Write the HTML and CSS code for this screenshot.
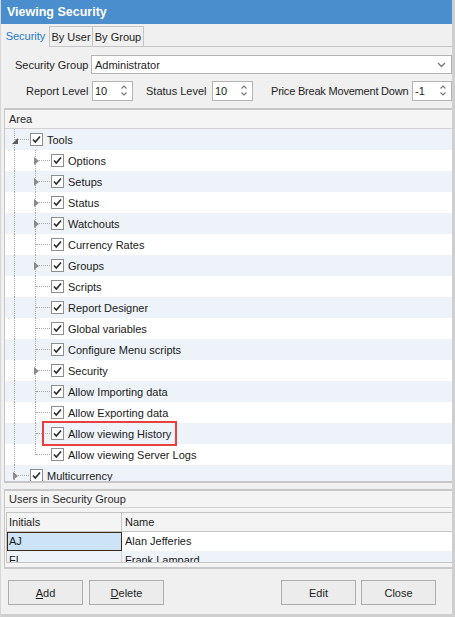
FILE: index.html
```html
<!DOCTYPE html>
<html>
<head>
<meta charset="utf-8">
<link rel="stylesheet" href="styles.css">
</head>
<body>
<div class="window">
  <div class="titlebar">Viewing Security</div>
  <div class="tabs">
    <div class="tab active">Security</div>
    <div class="tab t2">By User</div>
    <div class="tab t3">By Group</div>
    <div class="tabfill"></div>
  </div>
  <div class="form">
    <div class="frow">
      <span class="lbl lbl-group">Security Group</span>
      <div class="combo"><span>Administrator</span>
        <svg class="chev" width="9" height="6" viewBox="0 0 9 6"><path d="M1 1 L4.5 4.5 L8 1" fill="none" stroke="#777" stroke-width="1.3"/></svg>
      </div>
    </div>
    <div class="frow frow2">
      <span class="lbl lbl-report">Report Level</span>
      <div class="spin"><span>10</span>
        <svg class="arrows" width="8" height="13" viewBox="0 0 8 13"><path d="M1.5 4.5 L4 2 L6.5 4.5 M1.5 8.5 L4 11 L6.5 8.5" fill="none" stroke="#7a7a7a" stroke-width="1.2"/></svg>
      </div>
      <span class="lbl lbl-status">Status Level</span>
      <div class="spin"><span>10</span>
        <svg class="arrows" width="8" height="13" viewBox="0 0 8 13"><path d="M1.5 4.5 L4 2 L6.5 4.5 M1.5 8.5 L4 11 L6.5 8.5" fill="none" stroke="#7a7a7a" stroke-width="1.2"/></svg>
      </div>
      <span class="lbl lbl-price">Price Break Movement Down</span>
      <div class="spin spin-last"><span>-1</span>
        <svg class="arrows" width="8" height="13" viewBox="0 0 8 13"><path d="M1.5 4.5 L4 2 L6.5 4.5 M1.5 8.5 L4 11 L6.5 8.5" fill="none" stroke="#7a7a7a" stroke-width="1.2"/></svg>
      </div>
    </div>
  </div>

  <div class="panel area">
    <div class="phead">Area</div>
    <div class="tree">
      <div class="trow alt">
        <div class="cell v h"><svg class="exp-open" width="6" height="6" viewBox="0 0 6 6"><path d="M6 0 L6 6 L0 6 Z" fill="#5c5c5c"/></svg></div>
        <span class="cb"><svg width="11" height="11" viewBox="0 0 11 11"><path d="M2 5.5 L4.3 8 L9 2.5" fill="none" stroke="#2a2a2a" stroke-width="1.6"/></svg></span>
        <span class="txt">Tools</span>
      </div>
      <div class="trow">
        <div class="cell v"></div>
        <div class="cell v h"><svg class="exp" width="5" height="8" viewBox="0 0 5 8"><path d="M0 0 L5 4 L0 8 Z" fill="#8a8a8a"/></svg></div>
        <span class="cb"><svg width="11" height="11" viewBox="0 0 11 11"><path d="M2 5.5 L4.3 8 L9 2.5" fill="none" stroke="#2a2a2a" stroke-width="1.6"/></svg></span>
        <span class="txt">Options</span>
      </div>
      <div class="trow alt">
        <div class="cell v"></div>
        <div class="cell v h"><svg class="exp" width="5" height="8" viewBox="0 0 5 8"><path d="M0 0 L5 4 L0 8 Z" fill="#8a8a8a"/></svg></div>
        <span class="cb"><svg width="11" height="11" viewBox="0 0 11 11"><path d="M2 5.5 L4.3 8 L9 2.5" fill="none" stroke="#2a2a2a" stroke-width="1.6"/></svg></span>
        <span class="txt">Setups</span>
      </div>
      <div class="trow">
        <div class="cell v"></div>
        <div class="cell v h"><svg class="exp" width="5" height="8" viewBox="0 0 5 8"><path d="M0 0 L5 4 L0 8 Z" fill="#8a8a8a"/></svg></div>
        <span class="cb"><svg width="11" height="11" viewBox="0 0 11 11"><path d="M2 5.5 L4.3 8 L9 2.5" fill="none" stroke="#2a2a2a" stroke-width="1.6"/></svg></span>
        <span class="txt">Status</span>
      </div>
      <div class="trow alt">
        <div class="cell v"></div>
        <div class="cell v h"><svg class="exp" width="5" height="8" viewBox="0 0 5 8"><path d="M0 0 L5 4 L0 8 Z" fill="#8a8a8a"/></svg></div>
        <span class="cb"><svg width="11" height="11" viewBox="0 0 11 11"><path d="M2 5.5 L4.3 8 L9 2.5" fill="none" stroke="#2a2a2a" stroke-width="1.6"/></svg></span>
        <span class="txt">Watchouts</span>
      </div>
      <div class="trow">
        <div class="cell v"></div>
        <div class="cell v h"></div>
        <span class="cb"><svg width="11" height="11" viewBox="0 0 11 11"><path d="M2 5.5 L4.3 8 L9 2.5" fill="none" stroke="#2a2a2a" stroke-width="1.6"/></svg></span>
        <span class="txt">Currency Rates</span>
      </div>
      <div class="trow alt">
        <div class="cell v"></div>
        <div class="cell v h"><svg class="exp" width="5" height="8" viewBox="0 0 5 8"><path d="M0 0 L5 4 L0 8 Z" fill="#8a8a8a"/></svg></div>
        <span class="cb"><svg width="11" height="11" viewBox="0 0 11 11"><path d="M2 5.5 L4.3 8 L9 2.5" fill="none" stroke="#2a2a2a" stroke-width="1.6"/></svg></span>
        <span class="txt">Groups</span>
      </div>
      <div class="trow">
        <div class="cell v"></div>
        <div class="cell v h"></div>
        <span class="cb"><svg width="11" height="11" viewBox="0 0 11 11"><path d="M2 5.5 L4.3 8 L9 2.5" fill="none" stroke="#2a2a2a" stroke-width="1.6"/></svg></span>
        <span class="txt">Scripts</span>
      </div>
      <div class="trow alt">
        <div class="cell v"></div>
        <div class="cell v h"></div>
        <span class="cb"><svg width="11" height="11" viewBox="0 0 11 11"><path d="M2 5.5 L4.3 8 L9 2.5" fill="none" stroke="#2a2a2a" stroke-width="1.6"/></svg></span>
        <span class="txt">Report Designer</span>
      </div>
      <div class="trow">
        <div class="cell v"></div>
        <div class="cell v h"></div>
        <span class="cb"><svg width="11" height="11" viewBox="0 0 11 11"><path d="M2 5.5 L4.3 8 L9 2.5" fill="none" stroke="#2a2a2a" stroke-width="1.6"/></svg></span>
        <span class="txt">Global variables</span>
      </div>
      <div class="trow alt">
        <div class="cell v"></div>
        <div class="cell v h"></div>
        <span class="cb"><svg width="11" height="11" viewBox="0 0 11 11"><path d="M2 5.5 L4.3 8 L9 2.5" fill="none" stroke="#2a2a2a" stroke-width="1.6"/></svg></span>
        <span class="txt">Configure Menu scripts</span>
      </div>
      <div class="trow">
        <div class="cell v"></div>
        <div class="cell v h"><svg class="exp" width="5" height="8" viewBox="0 0 5 8"><path d="M0 0 L5 4 L0 8 Z" fill="#8a8a8a"/></svg></div>
        <span class="cb"><svg width="11" height="11" viewBox="0 0 11 11"><path d="M2 5.5 L4.3 8 L9 2.5" fill="none" stroke="#2a2a2a" stroke-width="1.6"/></svg></span>
        <span class="txt">Security</span>
      </div>
      <div class="trow alt">
        <div class="cell v"></div>
        <div class="cell v h"></div>
        <span class="cb"><svg width="11" height="11" viewBox="0 0 11 11"><path d="M2 5.5 L4.3 8 L9 2.5" fill="none" stroke="#2a2a2a" stroke-width="1.6"/></svg></span>
        <span class="txt">Allow Importing data</span>
      </div>
      <div class="trow">
        <div class="cell v"></div>
        <div class="cell v h"></div>
        <span class="cb"><svg width="11" height="11" viewBox="0 0 11 11"><path d="M2 5.5 L4.3 8 L9 2.5" fill="none" stroke="#2a2a2a" stroke-width="1.6"/></svg></span>
        <span class="txt">Allow Exporting data</span>
      </div>
      <div class="trow alt">
        <div class="cell v"></div>
        <div class="cell v h"></div>
        <span class="hl">
          <span class="cb"><svg width="11" height="11" viewBox="0 0 11 11"><path d="M2 5.5 L4.3 8 L9 2.5" fill="none" stroke="#2a2a2a" stroke-width="1.6"/></svg></span>
          <span class="txt">Allow viewing History</span>
        </span>
      </div>
      <div class="trow">
        <div class="cell v"></div>
        <div class="cell v last h"></div>
        <span class="cb"><svg width="11" height="11" viewBox="0 0 11 11"><path d="M2 5.5 L4.3 8 L9 2.5" fill="none" stroke="#2a2a2a" stroke-width="1.6"/></svg></span>
        <span class="txt">Allow viewing Server Logs</span>
      </div>
      <div class="trow alt">
        <div class="cell v h"><svg class="exp" width="5" height="8" viewBox="0 0 5 8"><path d="M0 0 L5 4 L0 8 Z" fill="#8a8a8a"/></svg></div>
        <span class="cb"><svg width="11" height="11" viewBox="0 0 11 11"><path d="M2 5.5 L4.3 8 L9 2.5" fill="none" stroke="#2a2a2a" stroke-width="1.6"/></svg></span>
        <span class="txt">Multicurrency</span>
      </div>
    </div>
  </div>

  <div class="panel users">
    <div class="phead">Users in Security Group</div>
    <div class="gridwrap">
      <div class="grid">
        <div class="grow ghead">
          <div class="gc c1">Initials</div>
          <div class="gc c2">Name</div>
        </div>
        <div class="gbody">
          <div class="grow">
            <div class="gc c1 sel">AJ</div>
            <div class="gc c2">Alan Jefferies</div>
          </div>
          <div class="grow alt">
            <div class="gc c1">FL</div>
            <div class="gc c2">Frank Lampard</div>
          </div>
        </div>
      </div>
    </div>
  </div>

  <div class="buttons">
    <button class="btn"><u>A</u>dd</button>
    <button class="btn"><u>D</u>elete</button>
    <span class="spacer"></span>
    <button class="btn">Edit</button>
    <button class="btn">Close</button>
  </div>
</div>
</body>
</html>
```

FILE: styles.css
```css
* { box-sizing: border-box; }
html, body { margin: 0; padding: 0; }
body {
  font-family: "Liberation Sans", Arial, sans-serif;
  font-size: 11px;
  color: #1e1e1e;
  background: #f0f0f0;
}
.window {
  width: 455px;
  height: 617px;
  background: #f0f0f0;
  border-right: 3px solid #cfcfcf;
  border-bottom: 3px solid #cfcfcf;
  border-left: 1px solid #d6d6d6;
  display: flex;
  flex-direction: column;
  overflow: hidden;
}
.titlebar {
  height: 24px;
  background: #4a8ecd;
  color: #fff;
  font-weight: bold;
  font-size: 12.5px;
  line-height: 24px;
  padding-left: 6px;
  flex: none;
}
.tabs {
  display: flex;
  height: 23px;
  padding: 1px 0 0 1px;
  flex: none;
}
.tab {
  line-height: 20px;
  border: 1px solid #c4c4c4;
  border-left: none;
  font-size: 11px;
  color: #222;
  background: #f0f0f0;
  margin-top: 1px;
  height: 21px;
  text-align: center;
}
.tab.active {
  border: none;
  color: #1f7ac7;
  margin-top: 0;
  height: 22px;
  line-height: 22px;
  width: 47px;
}
.t2 { width: 44px; border-left: 1px solid #c4c4c4; }
.t3 { width: 51px; }
.tabfill { flex: 1; border-bottom: 1px solid #c4c4c4; }
.form {
  flex: none;
  padding: 8px 0 8px 0;
}
.frow {
  display: flex;
  align-items: center;
  height: 19px;
}
.frow2 { margin-top: 7px; }
.lbl { font-size: 11px; color: #1e1e1e; white-space: nowrap; }
.lbl-group { margin-left: 14px; width: 76px; }
.lbl-report { margin-left: 25px; width: 66px; }
.lbl-status { margin-left: 13px; width: 66px; }
.lbl-price { margin-left: 18px; width: 141px; letter-spacing: -0.2px; }
.combo {
  width: 361px;
  height: 19px;
  background: #fff;
  border: 1px solid #b4b4b4;
  display: flex;
  align-items: center;
  justify-content: space-between;
  padding: 0 5px 0 3px;
  font-size: 11px;
}
.spin {
  width: 41px;
  height: 20px;
  background: #fff;
  border: 1px solid #b4b4b4;
  display: flex;
  align-items: center;
  justify-content: space-between;
  padding: 0 4px 0 2px;
  font-size: 11px;
  color: #1a1a1a;
}
.spin-last { width: 40px; }
.panel {
  margin-left: 3px;
  border-left: 1px solid #c8c8c8;
  background: #fff;
}
.phead {
  height: 21px;
  line-height: 19px;
  background: #f5f5f5;
  border-top: 2px solid #c6c6c6;
  border-bottom: 1px solid #d2d2d2;
  padding-left: 4px;
  font-size: 11px;
  color: #2a2a2a;
}
.area { flex: none; }
.tree {
  height: 354px;
  overflow: hidden;
  border-bottom: 2px solid #c6c6c6;
}
.trow {
  display: flex;
  align-items: center;
  height: 21px;
  background: #fff;
  padding-left: 1px;
}
.trow.alt { background: #eef3f9; }
.cell {
  width: 21px;
  height: 21px;
  position: relative;
  flex: none;
}
.cell.v::before {
  content: "";
  position: absolute;
  left: 8px;
  top: 0;
  bottom: 0;
  border-left: 1px dotted #a8a8a8;
}
.cell.v.last::before { bottom: 10px; }
.cell.h::after {
  content: "";
  position: absolute;
  left: 9px;
  right: -2px;
  top: 10px;
  border-top: 1px dotted #a8a8a8;
}
.cell svg {
  position: absolute;
  z-index: 1;
}
.exp-open { left: 6px; top: 9px; }
.exp { left: 7px; top: 7px; }
.cb {
  width: 13px;
  height: 13px;
  border: 1px solid #8e8e8e;
  background: #fff;
  margin-left: 3px;
  flex: none;
  position: relative;
  z-index: 1;
  display: flex;
}
.cb svg { display: block; }
.txt {
  margin-left: 4px;
  font-size: 11px;
  color: #1a1a1a;
  white-space: nowrap;
}
.hl {
  display: flex;
  align-items: center;
  position: relative;
}
.hl::after {
  content: "";
  position: absolute;
  left: -6px;
  right: -6px;
  top: -6px;
  bottom: -6px;
  border: 2px solid #e8403f;
  z-index: 2;
}
.users {
  margin-top: 6px;
  background: #f4f4f4;
  flex: none;
}
.users .phead {
  height: 19px;
  line-height: 17px;
  border-top: 2px solid #c8c8c8;
  background: #f4f4f4;
}
.gridwrap {
  padding: 4px 0 4px 1px;
  background: #f4f4f4;
  border-bottom: 2px solid #c8c8c8;
}
.grid {
  border-top: 1px solid #c4c4c4;
  border-bottom: 1px solid #c4c4c4;
  border-left: 1px solid #c4c4c4;
  background: #fff;
}
.grow {
  display: flex;
  height: 19px;
}
.ghead {
  background: #f4f4f4;
  border-bottom: 1px solid #c4c4c4;
  height: 19px;
}
.gbody {
  height: 30px;
  overflow: hidden;
}
.gc {
  line-height: 18px;
  padding-left: 2px;
  font-size: 11px;
  color: #1a1a1a;
  white-space: nowrap;
}
.c1 { width: 115px; border-right: 1px solid #d0d0d0; }
.c2 { flex: 1; padding-left: 3px; }
.ghead .c1 { border-right: 1px solid #c4c4c4; }
.gc.sel {
  background: #cde3f7;
  border: 1px solid #3a2a1e;
  line-height: 17px;
  padding-left: 1px;
}
.grow.alt { background: #eef3f9; }
.buttons {
  display: flex;
  align-items: center;
  padding: 11px 16px 0 7px;
  gap: 6px;
}
.spacer { flex: 1; }
.btn {
  width: 75px;
  height: 25px;
  border: 1px solid #adadad;
  background: #ececec;
  font-family: "Liberation Sans", Arial, sans-serif;
  font-size: 11px;
  color: #1e1e1e;
  padding: 0;
}
.btn:last-child { margin-left: -1px; }
.btn u { text-decoration: underline; }
```
